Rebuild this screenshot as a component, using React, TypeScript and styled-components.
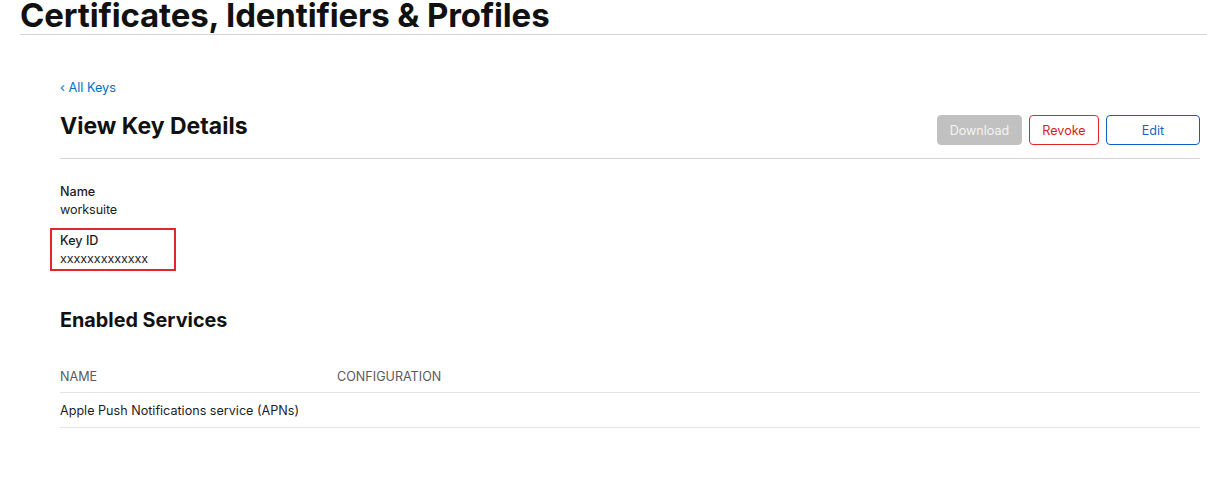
import React from 'react'
import styled, { createGlobalStyle } from 'styled-components'

const GlobalStyle = createGlobalStyle`
  body {
    margin: 0;
    background: #fff;
    font-family: Inter, 'Liberation Sans', sans-serif;
    color: #1d1d1f;
  }
`

const Page = styled.div`
  width: 1207px;
  height: 489px;
  overflow: hidden;
`

const Header = styled.header`
  margin-left: 20px;
  height: 35px;
  border-bottom: 1px solid #d8d8d8;
  box-sizing: border-box;
`

const HeaderTitle = styled.h1`
  margin: 0;
  font-size: 33px;
  line-height: 30px;
  font-weight: 700;
  letter-spacing: -0.15px;
  color: #111;
`

const Content = styled.main`
  margin: 0 7px 0 60px;
  padding-top: 45px;
`

const BackLink = styled.a`
  display: block;
  font-size: 12.7px;
  line-height: 16px;
  color: #0070c9;
  text-decoration: none;
`

const TitleRow = styled.div`
  display: flex;
  justify-content: space-between;
  align-items: flex-start;
  padding: 19px 0 13px;
  border-bottom: 1px solid #d2d2d7;
`

const PageTitle = styled.h2`
  margin: -3px 0 0;
  font-size: 23px;
  line-height: 28px;
  font-weight: 700;
  color: #111;
`

const Actions = styled.div`
  display: flex;
  gap: 7px;
`

const Button = styled.button<{ $variant: 'disabled' | 'danger' | 'primary'; $width: number }>`
  height: 30px;
  width: ${(p) => p.$width}px;
  border-radius: 4px;
  font-family: inherit;
  font-size: 12.6px;
  background: ${(p) => (p.$variant === 'disabled' ? '#c1c1c1' : '#fff')};
  border: 1px solid
    ${(p) => (p.$variant === 'disabled' ? '#c1c1c1' : p.$variant === 'danger' ? '#e0252b' : '#0e5ec7')};
  color: ${(p) => (p.$variant === 'disabled' ? '#f4f4f4' : p.$variant === 'danger' ? '#d81d24' : '#1a5fc4')};
`

const Fields = styled.div`
  padding-top: 24px;
  display: flex;
  flex-direction: column;
  align-items: flex-start;
`

const Field = styled.div<{ $highlight?: boolean }>`
  font-size: 12.6px;
  line-height: 18px;
  ${(p) =>
    p.$highlight &&
    `
    box-sizing: border-box;
    width: 126px;
    margin: 9px 0 0 -10px;
    padding: 2px 0 1px 8px;
    border: 2px solid #e3262b;
  `}
`

const Label = styled.div`
  font-weight: 500;
  color: #1d1d1f;
`

const Value = styled.div`
  color: #1d1d1f;
  letter-spacing: -0.1px;
`

const SectionTitle = styled.h3`
  margin: 37px 0 0;
  font-size: 19.8px;
  line-height: 24px;
  font-weight: 700;
  color: #111;
`

const Table = styled.div`
  margin-top: 25px;
`

const TableRow = styled.div<{ $head?: boolean }>`
  display: grid;
  grid-template-columns: 277px 1fr;
  box-sizing: border-box;
  height: ${(p) => (p.$head ? 36 : 35)}px;
  padding-top: ${(p) => (p.$head ? 4 : 0)}px;
  align-items: center;
  border-bottom: 1px solid #e3e3e6;
  font-size: 12.6px;
  color: ${(p) => (p.$head ? '#5a5a5e' : '#1d1d1f')};
  text-transform: ${(p) => (p.$head ? 'uppercase' : 'none')};
`

export default function App() {
  return (
    <Page>
      <GlobalStyle />
      <Header>
        <HeaderTitle>Certificates, Identifiers &amp; Profiles</HeaderTitle>
      </Header>
      <Content>
        <BackLink href='#'>‹ All Keys</BackLink>
        <TitleRow>
          <PageTitle>View Key Details</PageTitle>
          <Actions>
            <Button $variant='disabled' $width={85}>Download</Button>
            <Button $variant='danger' $width={70}>Revoke</Button>
            <Button $variant='primary' $width={94}>Edit</Button>
          </Actions>
        </TitleRow>
        <Fields>
          <Field>
            <Label>Name</Label>
            <Value>worksuite</Value>
          </Field>
          <Field $highlight>
            <Label>Key ID</Label>
            <Value>xxxxxxxxxxxxx</Value>
          </Field>
        </Fields>
        <SectionTitle>Enabled Services</SectionTitle>
        <Table>
          <TableRow $head>
            <span>Name</span>
            <span>Configuration</span>
          </TableRow>
          <TableRow>
            <span>Apple Push Notifications service (APNs)</span>
            <span />
          </TableRow>
        </Table>
      </Content>
    </Page>
  )
}
